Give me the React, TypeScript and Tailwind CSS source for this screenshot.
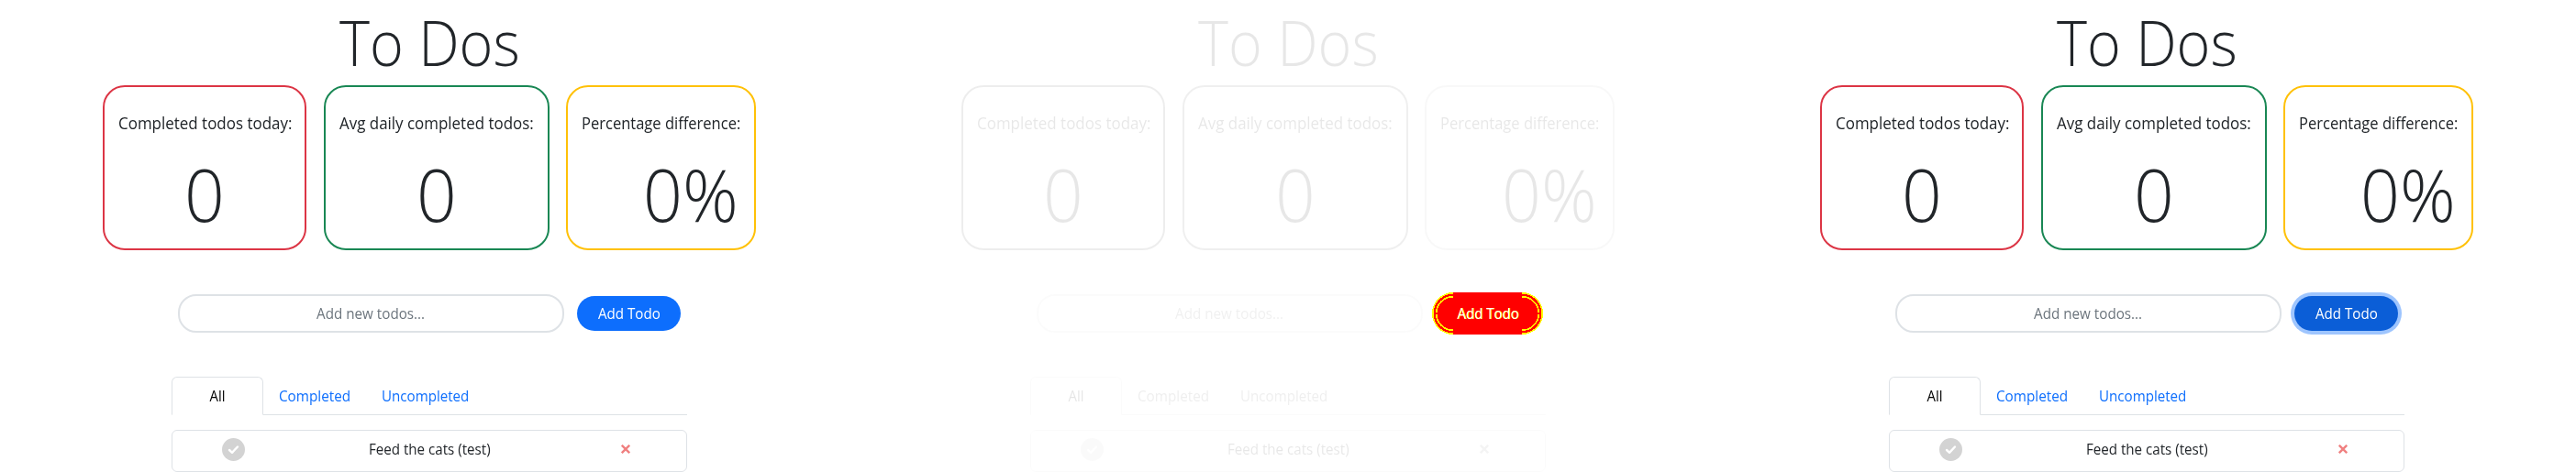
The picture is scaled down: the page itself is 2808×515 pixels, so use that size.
import React from "react";

type Variant = "idle" | "diff" | "focus";

function Stat({ className, label, labelClass, value, valueClass }: { className: string; label: string; labelClass: string; value: string; valueClass: string }) {
  return (
    <div className={`h-[180px] rounded-[24px] border-2 pt-[26px] whitespace-nowrap ${className}`}>
      <div className="h-[27px] pl-[15px] text-[18px] leading-[27px]">
        <span className={`inline-block origin-left ${labelClass}`}>{label}</span>
      </div>
      <div className="mt-[15px] h-[96px] text-[80px] leading-[96px] font-light">
        <span className={`inline-block ${valueClass}`}>{value}</span>
      </div>
    </div>
  );
}

function DiffButton() {
  return (
    <div className="-ml-1 flex h-[46px] w-[121px] items-center justify-center">
      <svg width="121" height="46" viewBox="0 0 121 46" shapeRendering="crispEdges">
        <rect width="121" height="46" rx="23" fill="#ff0000" />
        <g fill="none" stroke="#ffff00" strokeWidth="1.5">
          <path d="M23 .75A22 22 0 0 0 23 45.25M98 .75A22 22 0 0 1 98 45.25" />
          <path d="M23 4.75A18 18 0 0 0 4.75 22M4.75 24A18 18 0 0 0 23 41.25M98 4.75A18 18 0 0 1 116.25 22M116.25 24A18 18 0 0 1 98 41.25" />
        </g>
      </svg>
      <span className="absolute inline-block scale-x-[.936] text-[16px] text-white [text-shadow:1px_0_0_#ff0]">Add Todo</span>
    </div>
  );
}

function Panel({ variant }: { variant: Variant }) {
  const fade = variant === "diff" ? "opacity-10 grayscale" : "";
  return (
    <section className="h-[515px] w-[936px] shrink-0">
      <div className={`h-[273px] ${fade}`}>
        <h1 className="h-[93px] pl-[370px] text-[69px] leading-[91px] font-light whitespace-nowrap">
          <span className="inline-block origin-left scale-x-[.911]">To Dos</span>
        </h1>
        <div className="flex pl-[112px]">
          <Stat className="w-[222px] border-[#dc3545]" label="Completed todos today:" labelClass="scale-x-[.942]" value="0" valueClass="ml-[86px] scale-x-[.96]" />
          <Stat className="ml-[19px] w-[246px] border-[#198754]" label="Avg daily completed todos:" labelClass="scale-x-[.941]" value="0" valueClass="ml-[98px] scale-x-[.96]" />
          <Stat className="ml-[18px] w-[207px] border-[#ffc107]" label="Percentage difference:" labelClass="scale-x-[.918]" value="0%" valueClass="ml-[82px] origin-left scale-x-[.94]" />
        </div>
      </div>
      <div className="flex h-[46px] items-center pl-[194px] text-[16px] whitespace-nowrap mt-[46px]">
        <div className={`h-[42px] w-[421px] rounded-[20px] border-2 border-[#dee2e6] text-center leading-[38px] text-[#6c757d] ${fade}`}>
          <span className="inline-block scale-x-[.95]">Add new todos...</span>
        </div>
        <div className="relative ml-[14px]">
          {variant === "diff" ? (
            <DiffButton />
          ) : (
            <button className={`block h-[38px] w-[113px] rounded-[20px] text-center leading-[38px] text-white ${variant === "focus" ? "bg-[#0b5ed7] shadow-[0_0_0_4px_#9ec5fe]" : "bg-[#0d6efd]"}`}>
              <span className="inline-block scale-x-[.945]">Add Todo</span>
            </button>
          )}
        </div>
      </div>
      <div className={`mt-[46px] ml-[187px] w-[562px] text-[16px] whitespace-nowrap ${fade}`}>
        <div className="flex h-[42px] border-b border-[#dee2e6] text-[#0d6efd]">
          <div className="h-[42px] w-[100px] rounded-t-[6px] border border-b-white border-[#dee2e6] text-center leading-[40px] text-black">
            <span className="inline-block scale-x-[.936]">All</span>
          </div>
          <div className="w-[112px] pl-[17px] leading-[42px]">
            <span className="inline-block origin-left scale-x-[.955]">Completed</span>
          </div>
          <div className="pl-[17px] leading-[42px]">
            <span className="inline-block origin-left scale-x-[.945]">Uncompleted</span>
          </div>
        </div>
        <div className="mt-[16px] flex h-[46px] items-center rounded-[6px] border border-[#dee2e6]">
          <svg className="-mt-[3px] ml-[54px] shrink-0" width="25" height="25" viewBox="0 0 25 25">
            <circle cx="12.5" cy="12.5" r="12.5" fill="#d3d3d3" />
            <path d="M8 13l3 2.8 6-6.3" fill="none" stroke="#fff" strokeWidth="2.4" strokeLinecap="round" strokeLinejoin="round" />
          </svg>
          <div className="-mt-[4px] ml-[135px] w-[140px]">
            <span className="inline-block origin-left scale-x-[.945]">Feed the cats (test)</span>
          </div>
          <svg className="-mt-[4px] ml-[135px] shrink-0" width="10" height="10" viewBox="0 0 10 10">
            <path d="M.8 .8l8.4 8.4M9.2 .8l-8.4 8.4" stroke="#f08080" strokeWidth="2.4" />
          </svg>
        </div>
      </div>
    </section>
  );
}

export default function App() {
  return (
    <main className="flex h-[515px] w-[2808px] bg-white font-['Open_Sans','Noto_Sans',sans-serif] text-[#212529]">
      <Panel variant="idle" />
      <Panel variant="diff" />
      <Panel variant="focus" />
    </main>
  );
}
